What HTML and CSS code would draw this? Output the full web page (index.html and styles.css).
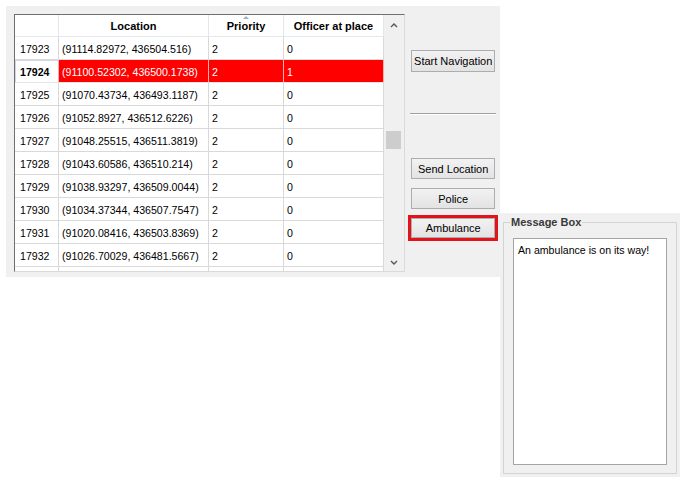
FILE: index.html
```html
<!DOCTYPE html>
<html>
<head>
<meta charset="utf-8">
<link rel="stylesheet" href="styles.css">
</head>
<body>
<div class="app">
  <div class="main">
    <div class="grid">
      <div class="table">
        <div class="row head">
          <div class="cell rh"></div>
          <div class="cell">Location</div>
          <div class="cell sorted">Priority</div>
          <div class="cell">Officer at place</div>
        </div>
        <div class="row"><div class="cell rh">17923</div><div class="cell">(91114.82972, 436504.516)</div><div class="cell">2</div><div class="cell">0</div></div>
        <div class="row sel"><div class="cell rh">17924</div><div class="cell">(91100.52302, 436500.1738)</div><div class="cell">2</div><div class="cell">1</div></div>
        <div class="row"><div class="cell rh">17925</div><div class="cell">(91070.43734, 436493.1187)</div><div class="cell">2</div><div class="cell">0</div></div>
        <div class="row"><div class="cell rh">17926</div><div class="cell">(91052.8927, 436512.6226)</div><div class="cell">2</div><div class="cell">0</div></div>
        <div class="row"><div class="cell rh">17927</div><div class="cell">(91048.25515, 436511.3819)</div><div class="cell">2</div><div class="cell">0</div></div>
        <div class="row"><div class="cell rh">17928</div><div class="cell">(91043.60586, 436510.214)</div><div class="cell">2</div><div class="cell">0</div></div>
        <div class="row"><div class="cell rh">17929</div><div class="cell">(91038.93297, 436509.0044)</div><div class="cell">2</div><div class="cell">0</div></div>
        <div class="row"><div class="cell rh">17930</div><div class="cell">(91034.37344, 436507.7547)</div><div class="cell">2</div><div class="cell">0</div></div>
        <div class="row"><div class="cell rh">17931</div><div class="cell">(91020.08416, 436503.8369)</div><div class="cell">2</div><div class="cell">0</div></div>
        <div class="row"><div class="cell rh">17932</div><div class="cell">(91026.70029, 436481.5667)</div><div class="cell">2</div><div class="cell">0</div></div>
        <div class="row"><div class="cell rh"></div><div class="cell"></div><div class="cell"></div><div class="cell"></div></div>
      </div>
      <div class="scrollbar">
        <div class="sb-btn sb-up"><svg width="8" height="6" viewBox="0 0 8 6"><polyline points="1,5 4,2 7,5" fill="none" stroke="#555" stroke-width="1.4"/></svg></div>
        <div class="sb-thumb"></div>
        <div class="sb-btn sb-down"><svg width="8" height="6" viewBox="0 0 8 6"><polyline points="1,1 4,4 7,1" fill="none" stroke="#555" stroke-width="1.4"/></svg></div>
      </div>
    </div>
    <div class="side">
      <button class="btn btn-nav">Start Navigation</button>
      <div class="sep"></div>
      <button class="btn btn-send">Send Location</button>
      <button class="btn btn-gap">Police</button>
      <button class="btn btn-gap btn-active">Ambulance</button>
    </div>
  </div>
  <div class="msgpanel">
    <fieldset class="msgbox">
      <legend class="msglegend">Message Box</legend>
      <div class="msgtext">An ambulance is on its way!</div>
    </fieldset>
  </div>
</div>
</body>
</html>
```
FILE: styles.css
```css
* { box-sizing: border-box; }
html, body { margin: 0; padding: 0; background: #ffffff; }
body { font-family: "Liberation Sans", Arial, sans-serif; font-size: 10.6px; color: #000; }

.app { display: flex; align-items: flex-start; padding: 6px 0 0 6px; }

.main {
  width: 494px;
  height: 271px;
  background: #f0f0f0;
  padding: 8px 0 0 8px;
  display: flex;
  align-items: flex-start;
}

.grid {
  width: 392px;
  height: 258px;
  display: flex;
  background: #fff;
  border: 1px solid;
  border-color: #6f6f6f #dadada #dadada #6f6f6f;
  overflow: hidden;
}

.table { width: 369px; display: flex; flex-direction: column; }
.row {
  display: grid;
  grid-template-columns: 44px 150px 75px 100px;
  height: 23px;
  flex: none;
}
.row.head { height: 22px; }

.cell {
  border-right: 1px solid #d9d9d9;
  border-bottom: 1px solid #d9d9d9;
  padding-left: 3px;
  display: flex;
  align-items: center;
  white-space: nowrap;
  overflow: hidden;
  padding-top: 1px;
}
.cell.rh { padding-left: 5px; }

.head .cell {
  justify-content: center;
  padding: 1px 0 0 0;
  font-weight: bold;
  font-size: 11px;
  border-color: #e4e8ee;
}
.sorted { position: relative; }
.sorted::before {
  content: "";
  position: absolute;
  top: 1px;
  left: 34px;
  border-left: 3px solid transparent;
  border-right: 3px solid transparent;
  border-bottom: 3px solid #95b1cf;
}

.sel .cell { background: #ff0000; color: #fff; border-right-color: #f3b3b3; border-bottom-color: #e6e6e6; }
.sel .cell.rh {
  background: #fff;
  color: #000;
  font-weight: bold;
  box-shadow: inset 1px 1px 0 #cfd8e2;
}

.scrollbar {
  width: 21px;
  height: 100%;
  background: #f0f0f0;
  display: flex;
  flex-direction: column;
  align-items: flex-start;
}
.sb-btn { width: 100%; display: flex; justify-content: center; align-items: center; }
.sb-up { height: 20px; }
.sb-thumb { width: 15px; height: 18px; background: #cdcdcd; margin-top: 96px; margin-left: 2px; }
.sb-down { height: 16px; margin-top: auto; padding-bottom: 1px; }

.side {
  width: 95px;
  padding-left: 6px;
  display: flex;
  flex-direction: column;
  align-items: flex-start;
}
.btn {
  width: 84px;
  height: 21px;
  padding: 0;
  margin: 0;
  border: 1px solid #adadad;
  background: linear-gradient(#f2f2f2, #e3e3e3);
  font-family: "Liberation Sans", Arial, sans-serif;
  font-size: 11px;
  color: #000;
  text-align: center;
  border-radius: 0;
}
.btn-nav { margin-top: 36px; height: 22px; }
.sep {
  width: 86px;
  height: 2px;
  margin-top: 41px;
  margin-left: -1px;
  border-top: 1px solid #a0a0a0;
  border-bottom: 1px solid #ffffff;
}
.btn-send { margin-top: 43px; }
.btn-gap { margin-top: 9px; }
.btn-active { outline: 3px solid #e2141b; outline-offset: 0; height: 20px; }

.msgpanel {
  margin-top: 207px;
  width: 180px;
  height: 264px;
  background: #f0f0f0;
  padding: 3px 3px 0 3px;
}
.msgbox {
  margin: 0;
  padding: 0 9px 8px 9px;
  border: 1px solid #d3d3d3;
  min-width: 0;
}
.msglegend {
  margin-left: -3px;
  padding: 0 1px;
  font-weight: bold;
  font-size: 11px;
  line-height: 13px;
  color: #3a3a3a;
}
.msgtext {
  margin-top: 9px;
  height: 227px;
  border: 1px solid #a5a5a5;
  background: #fff;
  padding: 5px 4px;
  font-size: 10.6px;
  line-height: 13px;
}
```
